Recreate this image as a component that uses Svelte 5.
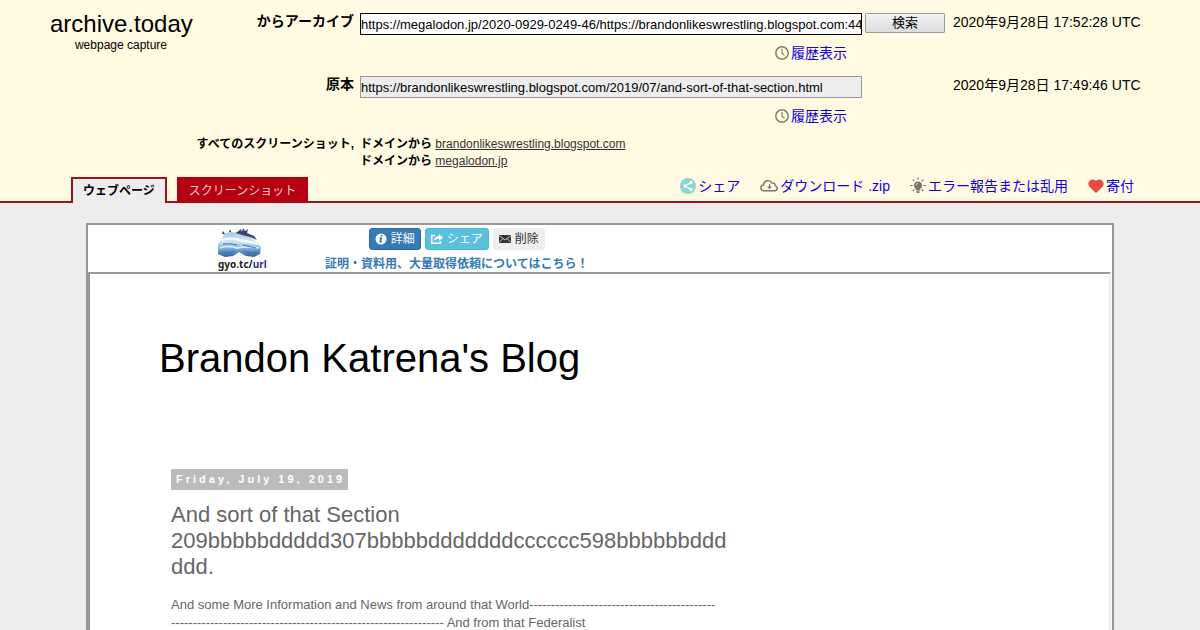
<script>
  let archiveUrl = 'https://megalodon.jp/2020-0929-0249-46/https://brandonlikeswrestling.blogspot.com:443/2019/07/and-sort-of-that-section.html'
  let originalUrl = 'https://brandonlikeswrestling.blogspot.com/2019/07/and-sort-of-that-section.html'

  const domains = ['brandonlikeswrestling.blogspot.com', 'megalodon.jp']
  const postText = 'And some More Information and News from around that World' + '-'.repeat(43)
  const postRest = '-'.repeat(63) + ' And from that Federalist'
</script>

{#snippet clock()}
  <svg width="14" height="14" viewBox="0 0 14 14" fill="none" stroke="#84826f" aria-hidden="true">
    <circle cx="7" cy="7" r="6.200" stroke-width="1.500" />
    <path d="M7 3v4.300l2.500 2" stroke-width="1.200" />
  </svg>
{/snippet}

<div class="page">
  <header>
    <form class="top" on:submit|preventDefault>
      <a class="brand" href="/">
        <span class="name">archive.today</span>
        <span class="sub">webpage capture</span>
      </a>

      <label for="q">からアーカイブ</label>
      <div class="field">
        <input id="q" name="q" bind:value={archiveUrl} autocomplete="off" />
        <a class="history" href="#history">{@render clock()}履歴表示</a>
      </div>
      <button class="search">検索</button>
      <time>2020年9月28日 17:52:28 UTC</time>

      <label class="second" for="original">原本</label>
      <div class="field">
        <input id="original" value={originalUrl} readonly />
        <a class="history" href="#original-history">{@render clock()}履歴表示</a>
      </div>
      <time class="last">2020年9月28日 17:49:46 UTC</time>

      <b class="all">すべてのスクリーンショット,</b>
      <div class="domains">
        {#each domains as domain}
          <div><b>ドメインから</b> <a href="/{domain}">{domain}</a></div>
        {/each}
      </div>
    </form>

    <div class="bar">
      <nav class="tabs">
        <a class="selected" href="#page">ウェブページ</a>
        <a href="#image">スクリーンショット</a>
      </nav>
      <nav class="tools">
        <a href="#share">
          <svg width="16" height="16" viewBox="0 0 16 16" aria-hidden="true">
            <circle cx="8" cy="8" r="8" fill="#8bd5d3" />
            <path d="M11 4.500L5 8l6 3.500" fill="none" stroke="#fff" stroke-width="1.300" />
            <g fill="#fff"><circle cx="11" cy="4.500" r="1.700" /><circle cx="5" cy="8" r="1.700" /><circle cx="11" cy="11.500" r="1.700" /></g>
          </svg>シェア
        </a>
        <a href="#download">
          <svg width="18" height="14" viewBox="0 0 18 14" fill="none" stroke="#77756a" stroke-width="1.400" aria-hidden="true">
            <path d="M4.500 11.800C-.3 11.800-.2 6.200 3.500 6 4 1 9.800.4 11.700 3.900c2.300-.4 3.500 1 3.400 2.700 3.200 1 2.600 5.200-.8 5.200z" />
            <path d="M9.500 5v4.500M7.700 7.700l1.800 1.800 1.800-1.800" stroke-width="1.100" />
          </svg>ダウンロード .zip
        </a>
        <a href="#report">
          <svg class="bulb" width="16" height="17" viewBox="0 0 16 17" aria-hidden="true">
            <path d="M8 4.500a4 4 0 0 0-2.300 7.300l.3 1.700h4l.3-1.700A4 4 0 0 0 8 4.500zM6.300 14.200h3.400v1L8.900 16H7.100l-.8-.8z" fill="#77756a" />
            <path d="M8 .5v2.300M2.700 2.700l1.600 1.700M13.300 2.700l-1.600 1.700M0 8.500h2.700M13.300 8.500H16M2.700 14l1.600-1.700M13.300 14l-1.600-1.700" stroke="#77756a" stroke-width="1.200" />
            <path d="M6 8.500Q6 6.500 8 6.200" fill="none" stroke="#ddd9c5" />
          </svg>エラー報告または乱用
        </a>
        <a href="#donate">
          <svg width="16" height="14" viewBox="0 0 16 14" aria-hidden="true">
            <path d="M8 14L1.500 7.800C-2.200 3.500 3.800-2.500 8 2c4.200-4.500 10.200 1.500 6.500 5.800z" fill="#e74c3c" />
          </svg>寄付
        </a>
      </nav>
    </div>
  </header>

  <main>
    <div class="frame">
      <div class="gyotaku">
        <a class="logo" href="#gyotaku">
          <svg width="44" height="30" viewBox="0 0 44 30" aria-hidden="true">
            <defs>
              <linearGradient id="whale" x1="0" y1="0" x2="0" y2="1">
                <stop offset="0" stop-color="#a9c6e2" />
                <stop offset="0.400" stop-color="#cfe6f4" />
                <stop offset="0.700" stop-color="#6ea6d4" />
                <stop offset="1" stop-color="#2a5c9c" />
              </linearGradient>
            </defs>
            <path d="M4 11L6 6l6-2 12 1 8 4 8 6 3 5-1 6-6 3-8-1-7-4-6 4-8 1-7-3-2-4 1-5z" fill="url(#whale)" />
            <path d="M18 5l5-4 1 3 1-4 2 3 3-2-1 4 7 3 3 4-7-3-8-2z" fill="#3c4370" />
            <path d="M4 12q9-3 18 0l19 4" stroke="#f3fafd" stroke-width="2.500" fill="none" />
            <path d="M2 20q8-3 17 0 10-2 22 0" stroke="#e0f1f8" stroke-width="1.500" fill="none" />
            <path d="M5 16q9-1 14 1M25 17l13 3M4 24q6 2 13-1M26 23q7 3 14 1" stroke="#3e78af" fill="none" />
            <path d="M4 6l1-3 2 3zM11 4l1-3 1 3z" fill="#343b63" />
          </svg>
          <span>gyo.tc/<span class="url">url</span></span>
        </a>
        <div class="actions">
          <div class="buttons">
            <button class="info">
              <svg width="12" height="12" viewBox="0 0 12 12" aria-hidden="true">
                <circle cx="6" cy="6" r="5.500" fill="#fff" />
                <path d="M5.800 2h1.800L7.200 3.600H5.400zM4.500 4.600h2.700L6.300 8.500h.8L6.900 9.600H4.200l.9-3.900h-.8z" fill="#337ab7" />
              </svg>詳細
            </button>
            <button class="share">
              <svg width="12" height="12" viewBox="0 0 12 12" aria-hidden="true">
                <path d="M4 2.500H.8v7.700h8.700V8" fill="none" stroke="#fff" stroke-width="1.400" />
                <path d="M8 1l4 3.500L8 8V6Q4.500 5.700 3 8 3.400 3 8 3z" fill="#fff" />
              </svg>シェア
            </button>
            <button>
              <svg width="12" height="12" viewBox="0 0 12 12" aria-hidden="true">
                <path d="M0 2h12v8H0z" fill="#333" />
                <path d="M0 2.500l6 4.500 6-4.500M0 9.500l4-4M12 9.500l-4-4" fill="none" stroke="#eee" stroke-width="0.800" />
              </svg>削除
            </button>
          </div>
          <a class="notice" href="#notice">証明・資料用、大量取得依頼についてはこちら！</a>
        </div>
      </div>

      <article>
        <h1>Brandon Katrena's Blog</h1>
        <div class="post">
          <h2><span>Friday, July 19, 2019</span></h2>
          <h3>And sort of that Section 209bbbbbddddd307bbbbbdddddddcccccc598bbbbbbdddddd.</h3>
          <p>{postText}<br />{postRest}</p>
        </div>
      </article>
    </div>
  </main>
</div>

<style>
  :global(body) {
    margin: 0;
    background: #ededed;
    font-family: "Liberation Sans", Arial, "Noto Sans CJK JP", sans-serif;
  }

  .page {
    height: 100vh;
    overflow: hidden;
    font-size: 14px;
    color: #000;
  }

  header {
    background: #fffae1;
    border-bottom: 2px solid #9a1420;
    padding-top: 13px;
  }

  .top {
    display: grid;
    grid-template-columns: 142px 162px minmax(0, 1fr) 80px 199px;
    grid-template-rows: 63px 60px auto;
    padding: 0 56px 0 50px;
  }

  .brand {
    grid-row: 1 / 4;
    text-align: center;
    color: #000;
    text-decoration: none;
  }

  .name, .sub {
    display: block;
  }

  .name {
    font-size: 24px;
    line-height: 22px;
  }

  .sub {
    font-size: 12px;
    line-height: 20px;
  }

  label {
    font-weight: bold;
    line-height: 16px;
    text-align: right;
  }

  .second {
    grid-column: 2;
  }

  .field {
    margin: 0 3px 0 6px;
    display: flex;
    flex-direction: column;
  }

  input {
    box-sizing: border-box;
    width: 100%;
    height: 22px;
    padding: 0;
    border: 1px solid #000;
    border-radius: 0;
    background: #fff;
    color: #000;
    font: 13px "Liberation Sans", Arial, sans-serif;
    outline: none;
  }

  input[readonly] {
    background: #ededed;
    border-color: #999;
  }

  .history {
    align-self: flex-end;
    display: flex;
    align-items: center;
    gap: 2px;
    margin: 9px 15px 0 0;
    line-height: 18px;
    color: #1100e0;
    text-decoration: none;
  }

  .search {
    height: 20px;
    padding: 0;
    border: 1px solid #999;
    border-radius: 1px;
    background: linear-gradient(#f3f3f3, #dcdcdc);
    color: #000;
    font: 13px/18px "Liberation Sans", Arial, "Noto Sans CJK JP", sans-serif;
  }

  time {
    margin-left: 8px;
    line-height: 18px;
    white-space: nowrap;
  }

  .last {
    grid-column: 5;
  }

  .all, .domains {
    font-size: 12px;
    line-height: 17px;
  }

  .all {
    grid-column: 2;
    justify-self: end;
    white-space: nowrap;
  }

  .domains {
    grid-column: 3;
    margin-left: 6px;
  }

  .domains a {
    color: #333;
  }

  .bar {
    display: flex;
    justify-content: space-between;
    margin: 7px 66px -2px 71px;
  }

  .tabs, .tools {
    display: flex;
  }

  .tabs {
    gap: 10px;
    font-size: 12px;
    line-height: 24px;
  }

  .tabs a {
    padding: 0 10px;
    border: 2px solid #b40010;
    border-bottom: 0;
    background: #b40010;
    color: #ffcbd2;
    text-decoration: none;
  }

  .tabs a.selected {
    background: #ededed;
    border-color: #9a1420;
    color: #000;
    font-weight: bold;
  }

  .tools {
    gap: 20px;
    line-height: 18px;
  }

  .tools a {
    display: flex;
    align-items: center;
    align-self: flex-start;
    gap: 2px;
    color: #1100e0;
    text-decoration: none;
    white-space: nowrap;
  }

  .tools .bulb {
    align-self: flex-start;
  }

  main {
    padding: 20px 86px 0;
  }

  .frame {
    border: 2px solid #999;
    background: #fff;
  }

  .gyotaku {
    display: flex;
    height: 47px;
    color: #333;
    font-size: 12px;
  }

  .logo {
    display: flex;
    flex-direction: column;
    margin: 3px 0 0 130px;
    width: 50px;
    color: #222;
    font: bold 10px/12px "Noto Sans", sans-serif;
    text-decoration: none;
  }

  .logo .url {
    color: #343087;
  }

  .actions {
    display: flex;
    flex-direction: column;
    align-items: center;
    margin: 3px 0 0 57px;
  }

  .buttons {
    display: flex;
    gap: 4px;
  }

  .buttons button {
    display: flex;
    align-items: center;
    gap: 4px;
    height: 22px;
    padding: 0 5px;
    border: 1px solid #eee;
    border-radius: 3px;
    background: #eee;
    color: #333;
    font: 12px/18px "Liberation Sans", Arial, "Noto Sans CJK JP", sans-serif;
  }

  .buttons .info {
    background: #337ab7;
    border-color: #2e6da4;
    color: #fff;
  }

  .buttons .share {
    background: #5bc0de;
    border-color: #46b8da;
    color: #fff;
  }

  .notice {
    margin-top: 5px;
    line-height: 18px;
    color: #337ab7;
    font-weight: bold;
    text-decoration: none;
    white-space: nowrap;
  }

  article {
    min-height: 500px;
    margin-right: 1px;
    border: 2px solid #eee;
    border-top-color: #999;
    border-left-color: #999;
    color: #666;
  }

  h1 {
    margin: 60px 69px 87px;
    color: #000;
    font-size: 40px;
    font-weight: normal;
    line-height: 48px;
  }

  .post {
    max-width: 556px;
    margin-left: 81px;
  }

  h2 {
    margin: 0 0 12px;
    font-size: 11px;
    line-height: 21px;
  }

  h2 span {
    display: inline-block;
    padding: 0 3px 0 5px;
    background: #bbb;
    color: #fff;
    letter-spacing: 3px;
  }

  h3 {
    margin: 0 0 16px;
    font-size: 22px;
    font-weight: normal;
    line-height: 26px;
    overflow-wrap: break-word;
  }

  p {
    margin: 0;
    font-size: 13px;
    line-height: 18px;
    white-space: nowrap;
  }
</style>
